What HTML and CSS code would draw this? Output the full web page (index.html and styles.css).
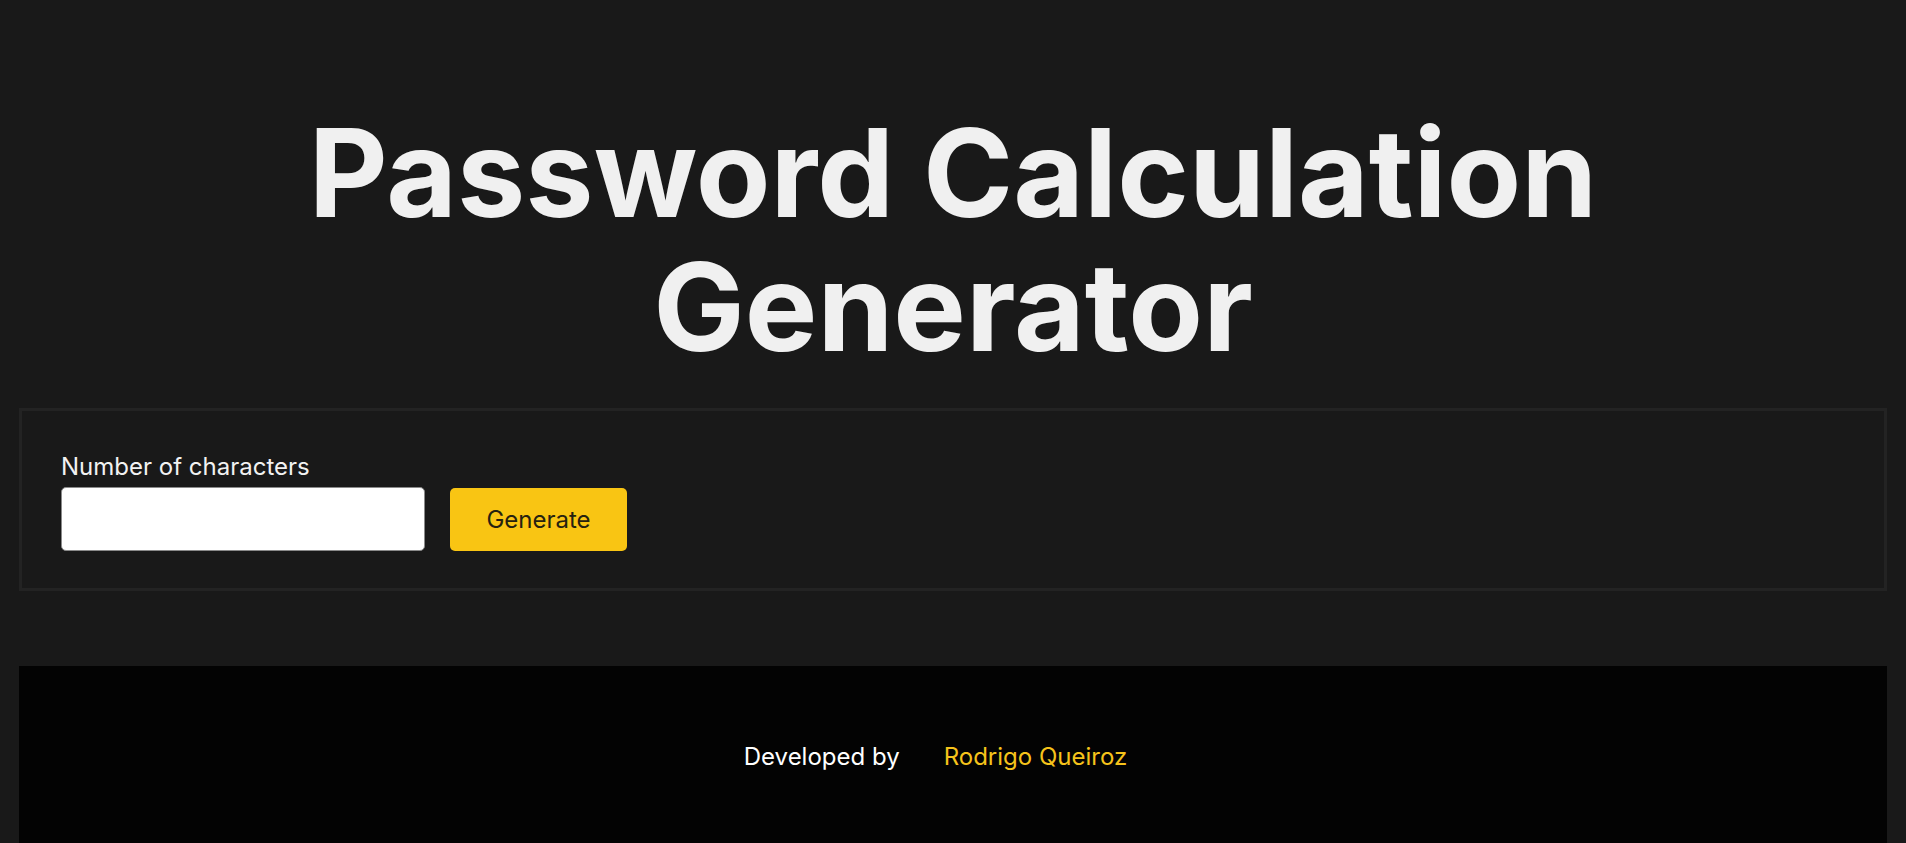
FILE: index.html
```html
<!DOCTYPE html>
<html lang="en">
<head>
<meta charset="utf-8">
<title>Password Calculation Generator</title>
<link rel="stylesheet" href="styles.css">
</head>
<body>
<main class="page">
  <h1 class="title">Password Calculation Generator</h1>
  <section class="card">
    <label class="label" for="chars">Number of characters</label>
    <div class="controls">
      <input class="input" id="chars" type="text">
      <button class="btn" type="button">Generate</button>
    </div>
  </section>
</main>
<footer class="footer">
  <span class="dev">Developed by</span>
  <a class="author" href="#">Rodrigo Queiroz</a>
</footer>
</body>
</html>
```
FILE: styles.css
```css
html, body {
  margin: 0;
  padding: 0;
  background: #191919;
  font-family: Inter, "Noto Sans", sans-serif;
}
.page {
  padding: 0 19px;
}
.title {
  margin: 0;
  padding-top: 106px;
  text-align: center;
  color: #f0f0f0;
  font-size: 122px;
  line-height: 134px;
  font-weight: 700;
  padding-bottom: 34px;
}
.card {
  border: 3px solid #232323;
  padding: 41px 39px 37px;
  display: flex;
  flex-direction: column;
  gap: 6px;
}
.label {
  color: #f2f2f2;
  font-size: 24px;
  line-height: 29px;
}
.controls {
  display: flex;
  align-items: center;
  gap: 25px;
}
.input {
  width: 364px;
  height: 64px;
  box-sizing: border-box;
  border: 1px solid #8a8a8a;
  border-radius: 5px;
  background: #fff;
  font-size: 24px;
  font-family: inherit;
  padding: 0 12px;
}
.btn {
  height: 63px;
  width: 177px;
  border: none;
  border-radius: 5px;
  background: #f9c513;
  color: #262210;
  font-family: inherit;
  font-size: 24px;
}
.footer {
  margin: 75px 19px 0;
  background: #030303;
  padding: 76px 35px 76px 0;
  display: flex;
  justify-content: center;
  gap: 44px;
  font-size: 24px;
  line-height: 29px;
}
.dev {
  color: #ffffff;
}
.author {
  color: #f6c31b;
  text-decoration: none;
}
```
